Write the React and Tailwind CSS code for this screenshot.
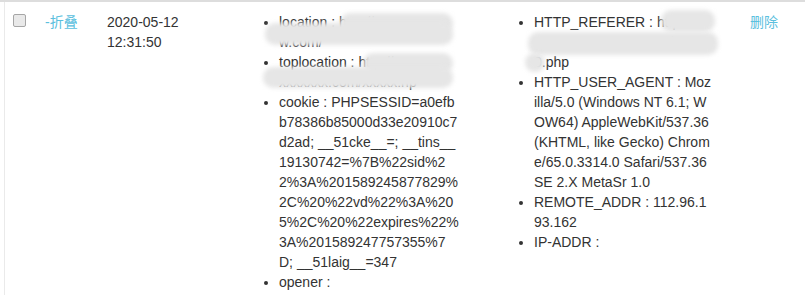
import { useState } from 'react';

const FONT = "font-['Liberation_Sans','Noto_Sans_CJK_SC',Arial,sans-serif]";

// blurred rectangles that hide private values in the screenshot
function Blur({ className }) {
  return <span className={`absolute rounded-[10px] bg-[#e6e6e6] blur-[2px] ${className}`} />;
}

const leftItems = [
  {
    key: 'location',
    lines: ['location : http://www.xxx', 'w.com/'],
    blurs: ['left-[61px] top-[1px] w-[113px] h-[20px]', 'left-[-14px] top-[11px] w-[188px] h-[22px]'],
  },
  {
    key: 'toplocation',
    lines: ['toplocation : http://www', 'xxxxxxx.com/xxxxx.np'],
    blurs: ['left-[84px] top-[1px] w-[90px] h-[20px]', 'left-[-16px] top-[15px] w-[190px] h-[21px]'],
  },
  {
    key: 'cookie',
    text: 'cookie : PHPSESSID=a0efbb78386b85000d33e20910c7d2ad; __51cke__=; __tins__19130742=%7B%22sid%22%3A%201589245877829%2C%20%22vd%22%3A%205%2C%20%22expires%22%3A%201589247757355%7D; __51laig__=347',
  },
  { key: 'opener', text: 'opener :' },
];

const rightItems = [
  {
    key: 'referer',
    lines: ['HTTP_REFERER : http:', 'xxxxxxxxxxxxxxx.com/xx', '0.php'],
    blurs: [
      'left-[127px] top-[-2px] w-[54px] h-[22px]',
      'left-[-6px] top-[20px] w-[190px] h-[23px]',
      'left-[-9px] top-[41px] w-[20px] h-[19px]',
    ],
  },
  {
    key: 'ua',
    text: 'HTTP_USER_AGENT : Mozilla/5.0 (Windows NT 6.1; WOW64) AppleWebKit/537.36 (KHTML, like Gecko) Chrome/65.0.3314.0 Safari/537.36 SE 2.X MetaSr 1.0',
  },
  { key: 'remote', text: 'REMOTE_ADDR : 112.96.193.162' },
  { key: 'ip', text: 'IP-ADDR :' },
];

function InfoList({ items }) {
  return (
    <ul className="list-disc pl-[40px] w-[220px]">
      {items.map((item) => (
        <li key={item.key} className="relative break-all">
          {item.lines
            ? item.lines.map((l, i) => (
                <span key={i} className="block">
                  {l}
                </span>
              ))
            : item.text}
          {item.blurs && item.blurs.map((b, i) => <Blur key={i} className={b} />)}
        </li>
      ))}
    </ul>
  );
}

export default function App() {
  const [checked, setChecked] = useState(false);

  return (
    <div className={`${FONT} text-[14px] leading-[20px] text-[#333] bg-white h-[295px] overflow-hidden border-t-2 border-[#ddd]`}>
      <div className="ml-[4px] border-l border-[#eaeaea] h-full flex pt-[10px]">
        <div className="w-[32px] shrink-0 pl-[8px]">
          <button
            onClick={() => setChecked(!checked)}
            className="block mt-[2px] w-[13px] h-[13px] rounded-[2px] border border-[#a6a6a6] bg-[#e9e9e9]"
            aria-label="select"
          />
        </div>
        <div className="w-[62px] shrink-0 pl-[8px]">
          <a className="text-[#5bc0de] cursor-pointer">-折叠</a>
        </div>
        <div className="w-[132px] shrink-0 pl-[8px]">
          <div>2020-05-12</div>
          <div>12:31:50</div>
        </div>
        <div className="w-[255px] shrink-0 pl-[8px]">
          <InfoList items={leftItems} />
        </div>
        <div className="w-[256px] shrink-0 pl-[8px]">
          <InfoList items={rightItems} />
        </div>
        <div className="pl-[8px]">
          <a className="text-[#5bc0de] cursor-pointer">删除</a>
        </div>
      </div>
    </div>
  );
}
